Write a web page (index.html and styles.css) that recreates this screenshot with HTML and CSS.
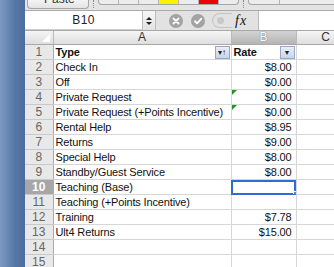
FILE: index.html
```html
<html>
  <head>
    <link rel="stylesheet" href="styles.css">
  </head>
  <body>
    <div class="screen">
      <div class="desktop"></div>
      <div class="excel">
        <div class="toolbar">
          <div class="tool-btn paste"><span>Paste</span></div>
          <div class="tool-sep"></div>
          <div class="tool-group">
            <div class="tool-cell"></div>
            <div class="tool-cell"></div>
            <div class="tool-cell"></div>
            <div class="tool-cell swatch yellow"></div>
            <div class="tool-cell"></div>
            <div class="tool-cell swatch red"></div>
            <div class="tool-cell"></div>
          </div>
          <div class="tool-sep"></div>
          <div class="tool-group right">
            <div class="tool-cell"></div>
            <div class="tool-cell"></div>
          </div>
        </div>

        <div class="formula-bar">
          <div class="name-box">B10</div>
          <div class="stepper">
            <span class="up"></span>
            <span class="down"></span>
          </div>
          <div class="formula-tools">
            <span class="round-btn">
              <svg width="14" height="14" viewBox="0 0 14 14"><path d="M4.5 4.5 L9.5 9.5 M9.5 4.5 L4.5 9.5" stroke="#fff" stroke-width="1.9" stroke-linecap="round"/></svg>
            </span>
            <span class="round-btn">
              <svg width="14" height="14" viewBox="0 0 14 14"><path d="M4 7.3 L6.1 9.3 L10.2 4.8" stroke="#fff" stroke-width="1.9" fill="none" stroke-linecap="round" stroke-linejoin="round"/></svg>
            </span>
            <span class="pill"><span class="dot"></span></span>
            <span class="fx">fx</span>
          </div>
          <div class="formula-input"></div>
        </div>

        <table class="sheet">
          <colgroup>
            <col class="col-head">
            <col class="col-a">
            <col class="col-b">
            <col class="col-c">
          </colgroup>
          <thead>
            <tr>
              <th class="corner"><span class="corner-tri"></span></th>
              <th>A</th>
              <th class="picked">B</th>
              <th>C</th>
            </tr>
          </thead>
          <tbody id="sheet-body">
            <!-- rows are built in the script -->
          </tbody>
        </table>
      </div>
    </div>

    <script>
      const rows = [
        { type: 'Type', rate: 'Rate', header: true },
        { type: 'Check In', rate: '$8.00' },
        { type: 'Off', rate: '$0.00' },
        { type: 'Private Request', rate: '$0.00', flag: true },
        { type: 'Private Request (+Points Incentive)', rate: '$0.00', flag: true },
        { type: 'Rental Help', rate: '$8.95' },
        { type: 'Returns', rate: '$9.00' },
        { type: 'Special Help', rate: '$8.00' },
        { type: 'Standby/Guest Service', rate: '$8.00' },
        { type: 'Teaching (Base)', rate: '', active: true },
        { type: 'Teaching (+Points Incentive)', rate: '' },
        { type: 'Training', rate: '$7.78' },
        { type: 'Ult4 Returns', rate: '$15.00' },
        { type: '', rate: '' },
        { type: '', rate: '' }
      ];

      const body = document.getElementById('sheet-body');

      rows.forEach((row, index) => {
        const tr = document.createElement('tr');
        if (row.header) {
          tr.innerHTML = `
            <th class="row-num">${index + 1}</th>
            <td class="bold">${row.type}<span class="filter sorted">&#9662;&#8593;</span></td>
            <td class="bold">${row.rate}<span class="filter">&#9660;</span></td>
            <td></td>
          `;
        } else {
          tr.innerHTML = `
            <th class="row-num ${row.active ? 'picked' : ''}">${index + 1}</th>
            <td>${row.type}</td>
            <td class="num ${row.flag ? 'flagged' : ''} ${row.active ? 'active' : ''}">${row.rate}</td>
            <td></td>
          `;
        }
        body.appendChild(tr);
      });
    </script>
  </body>
</html>
```

FILE: styles.css
```css
body {
  margin: 0;
  overflow: hidden;
  font-family: "Liberation Sans", Arial, sans-serif;
  color: #111;
}

.screen {
  display: flex;
  width: 334px;
  height: 267px;
}

.desktop {
  width: 25px;
  flex-shrink: 0;
  background: linear-gradient(90deg, #7d99c0 0%, #5677a6 60%, #4b6c9c 100%);
}

.excel {
  flex: 1;
  background-color: #fff;
  overflow: hidden;
}

/* toolbar that is cut by the top of the window */

.toolbar {
  height: 10px;
  background-color: #e4e4e4;
  border-bottom: 1px solid #a9a9a9;
  display: flex;
  align-items: flex-start;
  overflow: hidden;
}

.tool-btn {
  width: 60px;
  height: 8px;
  margin-left: 2px;
  border: 1px solid #a6a6a6;
  border-top: 0;
  border-radius: 0 0 4px 4px;
  background: linear-gradient(#f4f4f4, #e3e3e3);
  position: relative;
}

.tool-btn span {
  position: absolute;
  left: 16px;
  top: -8px;
  font-size: 12px;
  color: #333;
}

.tool-sep {
  width: 0;
  height: 8px;
  margin: 0 4px;
  border-left: 1px dotted #888;
}

.tool-group {
  display: flex;
  height: 4px;
  border: 1px solid #a6a6a6;
  border-top: 0;
  border-radius: 0 0 4px 4px;
  background-color: #ececec;
  overflow: hidden;
}

.tool-cell {
  width: 19px;
  border-right: 1px solid #b4b4b4;
}

.tool-cell:last-child {
  border-right: 0;
}

.swatch.yellow {
  background-color: #fff200;
}

.swatch.red {
  background-color: #f00000;
}

.tool-group.right {
  flex: 1;
  margin-right: -4px;
}

.tool-group.right .tool-cell {
  width: 30px;
}

/* formula bar */

.formula-bar {
  display: flex;
  height: 19px;
  background-color: #e2e2e2;
  border-bottom: 1px solid #a8a8a8;
}

.name-box {
  width: 117px;
  background-color: #fff;
  text-align: center;
  font-size: 12px;
  line-height: 18px;
  letter-spacing: 0.3px;
  color: #222;
  border-bottom: 1px solid #cfcfcf;
}

.stepper {
  width: 12px;
  border-left: 1px solid #bdbdbd;
  border-right: 1px solid #bdbdbd;
  background: linear-gradient(#f7f7f7, #e2e2e2);
  display: flex;
  flex-direction: column;
  align-items: center;
  justify-content: center;
  gap: 2px;
}

.stepper .up {
  border-left: 3px solid transparent;
  border-right: 3px solid transparent;
  border-bottom: 3px solid #222;
}

.stepper .down {
  border-left: 3px solid transparent;
  border-right: 3px solid transparent;
  border-top: 3px solid #222;
}

.formula-tools {
  width: 102px;
  display: flex;
  align-items: center;
  padding-left: 13px;
  box-sizing: border-box;
}

.round-btn {
  width: 14px;
  height: 14px;
  border-radius: 50%;
  background-color: #a3a3a3;
  display: flex;
  margin-right: 8px;
}

.pill {
  width: 20px;
  height: 15px;
  border: 1px solid #c4c4c4;
  border-right: 0;
  border-radius: 8px 0 0 8px;
  display: flex;
  align-items: center;
  padding-left: 4px;
  box-sizing: border-box;
  margin-left: -1px;
}

.pill .dot {
  width: 7px;
  height: 7px;
  border-radius: 50%;
  background-color: #c9c9c9;
}

.fx {
  font-family: "Liberation Serif", serif;
  font-style: italic;
  font-size: 14px;
  color: #111;
  margin-left: 3px;
  letter-spacing: 1px;
}

.formula-input {
  flex: 1;
  background-color: #fff;
  border-left: 1px solid #b9b9b9;
}

/* sheet */

.sheet {
  border-collapse: collapse;
  table-layout: fixed;
  width: 330px;
}

.col-head {
  width: 28px;
}

.col-a {
  width: 178px;
}

.col-b {
  width: 65px;
}

.col-c {
  width: 59px;
}

.sheet thead th {
  height: 13px;
  padding: 0;
  font-weight: normal;
  font-size: 12px;
  line-height: 13px;
  color: #333;
  background: linear-gradient(#f5f5f5, #dedede);
  border-right: 1px solid #b9b9b9;
  border-bottom: 1px solid #a9a9a9;
}

.sheet thead th.picked {
  background: linear-gradient(#d3d3d3, #b4b4b4);
  color: #fff;
  text-shadow: 0 0 1px #555;
}

.sheet thead th.corner {
  position: relative;
}

.corner-tri {
  position: absolute;
  right: 3px;
  bottom: 2px;
  width: 0;
  height: 0;
  border-left: 8px solid transparent;
  border-bottom: 8px solid #fff;
}

.sheet tbody tr {
  height: 15px;
}

.sheet td {
  padding: 0 2px;
  height: 14px;
  line-height: 14px;
  white-space: nowrap;
  overflow: hidden;
  border-right: 1px solid #d6d6d6;
  border-bottom: 1px solid #d6d6d6;
  font-size: 11px;
  letter-spacing: -0.15px;
  position: relative;
}

.sheet td.bold {
  font-weight: bold;
}

.sheet td.num {
  text-align: right;
  padding-right: 4px;
}

.row-num {
  padding: 0;
  font-size: 12px;
  line-height: 14px;
  color: #666;
  font-weight: normal;
  background-color: #e8e8e8;
  border-right: 1px solid #a9a9a9;
  border-bottom: 1px solid #c9c9c9;
}

.row-num.picked {
  background-color: #a7a7a7;
  color: #fff;
  font-weight: bold;
}

.filter {
  position: absolute;
  right: 1px;
  top: 1px;
  width: 13px;
  height: 11px;
  border: 1px solid #95a9c6;
  background: linear-gradient(#e9eef6, #c8d5e8);
  font-size: 7px;
  line-height: 11px;
  text-align: center;
  font-weight: normal;
  letter-spacing: 0;
  color: #222;
}

.filter.sorted {
  font-size: 8px;
}

.flagged::before {
  content: "";
  position: absolute;
  left: 0;
  top: 0;
  border-top: 5px solid #1d9a1d;
  border-right: 5px solid transparent;
}

.active {
  outline: 2px solid #2a6fd6;
  outline-offset: -2px;
}

.active::after {
  content: "";
  position: absolute;
  right: -3px;
  bottom: -3px;
  width: 4px;
  height: 4px;
  background-color: #4a8ce8;
  border: 1px solid #fff;
  z-index: 2;
}
```
